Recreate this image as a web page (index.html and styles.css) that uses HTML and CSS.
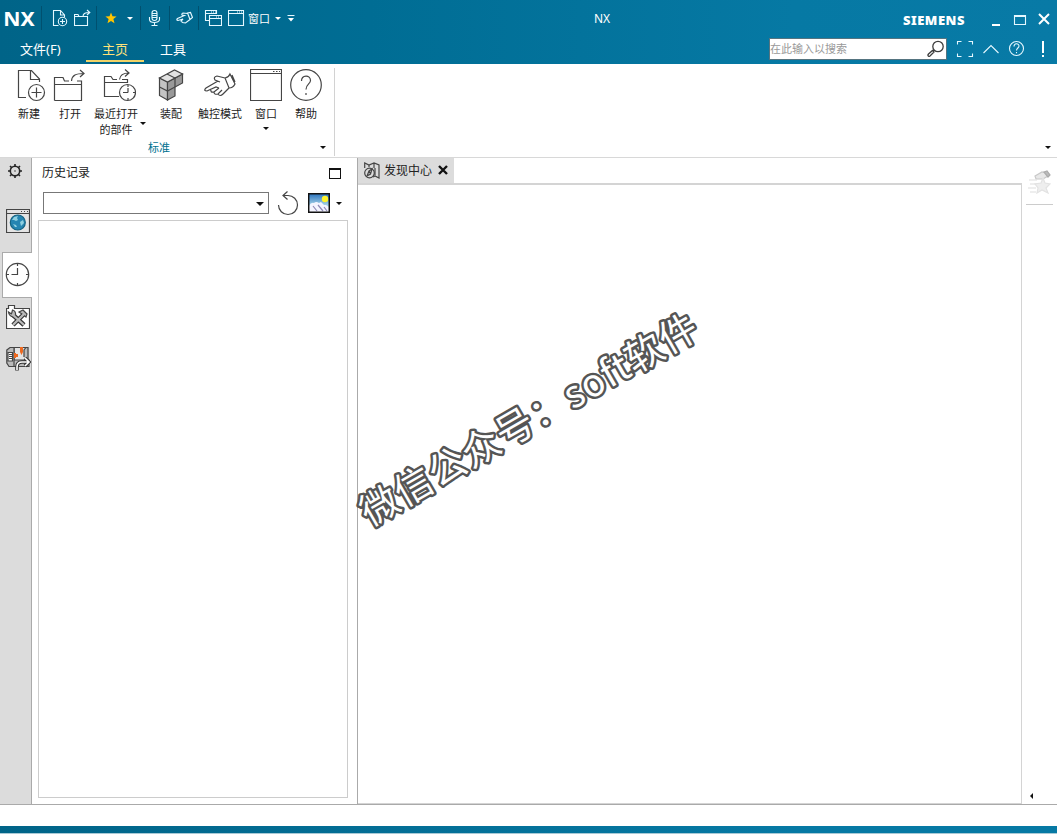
FILE: index.html
```html
<!DOCTYPE html>
<html lang="zh-CN">
<head>
<meta charset="utf-8">
<title>NX</title>
<link rel="stylesheet" href="styles.css">
</head>
<body>
<div class="app">
  <header class="header">
    <div class="titlebar">
      <div class="quick">
        <span class="logo">NX</span>
        <i class="sep sep-logo"></i>
        <svg class="q-new" width="16" height="18" viewBox="0 0 16 18"><path d="M6.5 16.5H1.5V1.5H8.5L12.5 6V8M8.5 1.5V6H12.5"/><circle cx="10.5" cy="12.5" r="4.2"/><path d="M8 12.5h5M10.500 10v5"/></svg>
        <svg class="q-open" width="17" height="18" viewBox="0 0 17 18"><path d="M.5 7.500V16.500H13.500V7.500ZM.5 7.500V5.500H4L5 7.500M9 7.500C9 5 10.500 3.500 15.500 3.500M13 1L15.800 3.500L13 6"/></svg>
        <i class="sep sep-a"></i>
        <svg class="q-star" width="12" height="12" viewBox="0 0 12 12"><path d="M6 .5L7.500 4.300L11.600 4.500L8.400 7.100L9.500 11.200L6 8.900L2.500 11.200L3.600 7.100L.4 4.500L4.500 4.300Z"/></svg>
        <i class="tri light star-tri"></i>
        <i class="sep sep-b"></i>
        <svg class="q-mic" width="13" height="18" viewBox="0 0 13 18"><rect x="4" y="1.500" width="5" height="10" rx="2.500"/><path d="M4 4.500h5M4 6.500h5M4 8.500h5M1.500 8v2.500c0 4 10 4 10 0V8M6.500 13.500v3M3.500 16.500h6"/></svg>
        <i class="sep sep-c"></i>
        <svg class="q-touch" width="17" height="14" viewBox="0 0 34 28"><path d="M23 4L29 3L33 13L28 17Z M23 5L14 4Q11 5 12 8L17 9L3 15Q0 18 4 19L14 16L10 20L13 23L19 24L28 17"/></svg>
        <i class="sep sep-d"></i>
        <svg class="q-cascade" width="18" height="18" viewBox="0 0 18 18"><path d="M5 11.500H1.500V1.500H12.500V5M1.500 4.500H12M5.500 7v9.500H17.500V6.500H5.500ZM5.500 9.500H17.500M7 3h1M9 3h1M11 3h1M12 8h1M14 8h1"/></svg>
        <svg class="q-window" width="17" height="18" viewBox="0 0 17 18"><path d="M.5 1.500h15v15H.5ZM.5 4.500h15M9 3h1M11 3h1M13 3h1"/></svg>
        <span class="q-label">窗口</span>
        <i class="tri light win-tri"></i>
        <svg class="q-more" width="8" height="7" viewBox="0 0 8 7"><path d="M.5 .5h7"/><path class="solid" d="M1 3h6L4 6.500Z"/></svg>
      </div>
      <div class="title">NX</div>
      <div class="brand">
        <span class="siemens">SIEMENS</span>
        <svg class="winctl" width="64" height="18" viewBox="0 0 64 18"><path class="thick" d="M1 15h8"/><path d="M23.500 5.500h11v9h-11ZM23.500 6.500h11"/><path class="thick" d="M48 4L58 14M58 4L48 14"/></svg>
      </div>
    </div>
    <nav class="menubar">
      <span class="menu file">文件(F)</span>
      <span class="menu home">主页</span>
      <span class="menu tools">工具</span>
      <div class="menu-right">
        <div class="search"><span>在此输入以搜索</span>
          <svg width="18" height="18" viewBox="0 0 18 18"><circle cx="11" cy="6.500" r="5.200"/><path d="M7.200 10L6 11.200M5.500 10.500L7 12L3 16Q1.500 17 1 15.500Q.7 15 1.500 14Z"/></svg>
        </div>
        <svg class="tools-icons" width="92" height="20" viewBox="0 0 92 20"><path d="M1.500 5.500V2.500H5.500M12.500 2.500H16.500V5.500M16.500 14.500V17.500H12.500M5.500 17.500H1.500V14.500M27.500 14L35 6.500L42.500 14"/><circle cx="60.500" cy="9.500" r="7"/><path d="M58 7.500C58 4 63 4 63 7C63 9 60.500 9 60.500 11.500M60.500 13v1.200"/><path class="thick" d="M87 2v12M87 16v2"/></svg>
      </div>
    </nav>
  </header>

  <section class="ribbon">
    <div class="group">
      <div class="commands">
        <div class="cmd new"><svg width="32" height="34" viewBox="0 0 32 34"><path d="M10 29.500H2.500V2.500H15.500L23.500 11V14M14.500 2.500V11.500H23.500"/><circle cx="20.500" cy="24.500" r="8"/><path d="M15.500 24.500h10M20.500 19.500v10"/></svg><span>新建</span></div>
        <div class="cmd open"><svg width="34" height="34" viewBox="0 0 34 34"><path d="M2.500 32.500V9.500H11L12.500 13H17M25 13h4.500V32.500H2.500M2.500 16.500h27M19.500 13C20 7 24 5.500 32 5.500M28 2L32 5.500L28 9"/></svg><span>打开</span></div>
        <div class="cmd recent"><svg width="34" height="34" viewBox="0 0 34 34"><path d="M17 28.500H2.500V8.500H9L11 11.500H15M20 11.500H25.500V15M2.500 14.500H25.500M17.500 11.500C18 7 21 5 27 5M23 1.500L27 5L23 8.500"/><circle cx="25.500" cy="24.500" r="8"/><path d="M26 17v2M26 24.500V20M26 24.500h-5M26 30v2M31 24.500h2"/></svg><span>最近打开<br>的部件</span><i class="tri recent-tri"></i></div>
        <div class="cmd assembly"><svg width="26" height="34" viewBox="0 0 26 34">
          <path class="face-l" d="M1.500 10L9.500 14V32L1.500 27.500Z"/><path class="face-r" d="M9.500 14L24.500 6V15L17 19V28L9.500 32Z"/><path class="face-t" d="M1.500 10L16.500 2L24.500 6L9.500 14Z"/><path d="M1.500 19L9.500 23L17 19V10L9 6"/></svg><span>装配</span></div>
        <div class="cmd touch"><svg width="34" height="34" viewBox="0 0 34 34"><path d="M22 10Q26 9 27 6L32 16Q30 20 26 20ZM29 7L32 14M22 10L14 8Q10 9 12 12L17 14M15 13L3 20Q0 23 4 23L13 19L16 20M8 21Q7 25 11 24L16 20M11 24Q11 27 15 26L19 22M15 26Q17 29 20 26L26 20"/></svg><span>触控模式</span></div>
        <div class="cmd window"><svg width="32" height="34" viewBox="0 0 32 34"><path d="M.5 1.500h31v31H.5ZM.5 5.500h31M23 3.500h1.500M26 3.500h1.500M29 3.500h1"/></svg><span>窗口</span><i class="tri"></i></div>
        <div class="cmd help"><svg width="32" height="34" viewBox="0 0 32 34"><circle cx="16" cy="17" r="15.300"/><path d="M11.500 13C11.500 6.500 20.500 6.500 20.500 12.500C20.500 16 16 16 16 21.500M16 25v2"/></svg><span>帮助</span></div>
      </div>
      <div class="group-name"><span>标准</span><i class="tri"></i></div>
    </div>
    <i class="tri ribbon-tri"></i>
  </section>

  <main class="workspace">
    <aside class="rail">
      <svg class="gear" width="16" height="16" viewBox="0 0 16 16"><circle cx="8" cy="8" r="4.700"/><path d="M8 1v3M8 12v3M1 8h3M12 8h3M3 3l2 2M11 11l2 2M13 3l-2 2M5 11l-2 2"/><circle class="dot" cx="8" cy="8" r=".7"/></svg>
      <div class="rail-item web"><svg width="24" height="24" viewBox="0 0 24 24"><path class="pale" d="M.5 .5h23v23H.5ZM.5 4.500h23M15 2.500h1M18 2.500h1M21 2.500h1"/><circle class="globe" cx="11.800" cy="13.500" r="7.500"/><path class="land" d="M6 11L8 8L12 7L11 9L12 11L10 12L8 11ZM14 13L17 11L18 14L15 17ZM7 15L10 16L11 18L9 18Z"/></svg></div>
      <div class="rail-item history"><svg width="25" height="25" viewBox="0 0 25 25"><circle cx="12.500" cy="12.500" r="11.200"/><path d="M12.500 1v3M12.500 6v6.500H6.500M1 12.500h3M21 12.500h3M12.500 21v3"/></svg></div>
      <div class="rail-item toolbox"><svg width="24" height="24" viewBox="0 0 24 24"><path class="paper" d="M.5 23.500V3.500H2.500V.5H8.500V3.500H23.500V23.500Z"/><path class="wrench-back" d="M6 9L18 20M18 9L7 20"/><path class="metal" d="M2.500 7L5.500 9L6.500 5Q10 6 9.500 10L7 12Q3 11 2.500 7ZM13 7L17 5L21 9L20 12L16 9Z"/><path class="wrench" d="M6 9L18 20M18 9L7 20"/></svg></div>
      <div class="rail-item machine"><svg width="25" height="25" viewBox="0 0 25 25"><path class="pale" d="M8 1.500H21.500V15H8Z"/><path class="metal" d="M.8 4L4 1.500H8V20.500H3L.8 17ZM8 14H23V20.500H8ZM18 11V4L20 1.500H22V14"/><path class="paper" d="M2 6.500h4.500v8.500H2Z"/><path d="M3 8.500h3M3 10.500h3M3 12.500h3"/><path class="orange" d="M8 7h2v1h2v3h-2v1H8ZM14 1h3v5l-1.500 3L14 6Z"/><path class="hose-back" d="M11 24.500V21Q11 16 16 16H22M19 12L23 16L19 20"/><path class="hose" d="M11 24V21Q11 16 16 16H22M19 12L23 16L19 20"/></svg></div>
    </aside>

    <section class="panel">
      <div class="panel-title"><span>历史记录</span><i class="maximize"></i></div>
      <div class="panel-tools">
        <div class="combo"><i class="tri big"></i></div>
        <svg class="refresh" width="22" height="25" viewBox="0 0 22 25"><path d="M1.500 14A9.500 9.500 0 1 0 11 4.500H6M10.500 .5L6 4.500L10.500 8.500"/></svg>
        <svg class="picture" width="22" height="20" viewBox="0 0 22 20"><defs><linearGradient id="sky" x2="0" y2="1"><stop stop-color="#226cba"/><stop offset=".7" stop-color="#b9e1ef"/></linearGradient></defs><path fill="url(#sky)" d="M0 0h22v20H0Z"/><circle class="sun" cx="17" cy="6" r="3.200"/><path class="mountain" d="M1 13Q3 9 6 10Q8 8 11 10L13 9L16 12L18 12L21 14V19H1Z"/><path class="shade" d="M5 13L9 18M10 12L15 18M16 14L19 18"/><path class="frame" d="M.7 .7h20.600v18.600H.7Z"/></svg>
        <i class="tri"></i>
      </div>
      <div class="history-list"></div>
    </section>

    <section class="content">
      <div class="doc-tab">
        <svg width="16" height="17" viewBox="0 0 16 17"><path d="M.7 6V1L5 3L10 1L15 3V16L11 14L9 15M5 3V5M10 1V6M11 6V14"/><circle cx="5.500" cy="11" r="4.800"/><path d="M3 14L5 9L8 7L6.500 12ZM5 9L6.500 12"/></svg>
        <span>发现中心</span>
        <svg class="close" width="10" height="10" viewBox="0 0 10 10"><path d="M1 1L9 9M9 1L1 9"/></svg>
      </div>
      <div class="canvas-row">
        <div class="canvas"></div>
        <div class="right-rail">
          <i class="collapse"></i>
        </div>
      </div>
      <div class="favorite"><svg width="23" height="24" viewBox="0 0 23 24"><path class="cup" d="M7 6L14 2L18 3L20 6L15 9L8 9Z"/><path class="cuff" d="M16 2L19 1L22 5L20 7Z"/><path class="lines" d="M1 10h8M2 14h8M0 18h8M2 22h6"/><path class="faint-star" d="M15 8L17 13L22 14L18 18L20 23L14 20L9 23L10 18L7 14L13 13Z"/></svg></div>
      <svg class="watermark" width="390" height="260" viewBox="0 0 390 260"><text x="0" y="0" transform="translate(32 238) rotate(-30)" textLength="382.500">微信公众号：soft软件</text></svg>
    </section>
  </main>
  <footer class="status"></footer>
  <div class="bottom-edge"></div>
</div>
</body>
</html>
```
FILE: styles.css
```css
* { box-sizing: border-box; }
body { margin: 0; overflow: hidden; background: #fff; color: #222; font-family: "Noto Sans", "Noto Sans CJK SC", sans-serif; }
svg { display: block; flex: none; fill: none; stroke: #454545; stroke-width: 1.2; }
.app { display: flex; flex-direction: column; width: 1057px; height: 834px; }

.header { height: 64px; flex: none; color: #fff; background: linear-gradient(90deg, #006488, #006d94 35%, #0679a4 75%, #087aa6); }
.header svg { stroke: #e5f8ff; stroke-width: 1.1; }
.titlebar { height: 36px; display: grid; grid-template-columns: 500px 204px 1fr; }
.quick { display: flex; align-items: center; height: 36px; }
.logo { width: 40px; padding-left: 3px; font: bold 20px/36px "Noto Sans", sans-serif; transform: translateY(1px) scaleX(1.06); transform-origin: left; }
.sep { width: 1px; height: 24px; background: #00506f; }
.sep-logo { margin-left: 1px; }
.q-new { margin-left: 10px; }
.q-open { margin-left: 6px; }
.sep-a { margin-left: 5px; }
.header .q-star { margin-left: 8px; fill: #ffc400; stroke: none; }
.tri { display: block; flex: none; width: 0; height: 0; border: solid transparent; border-width: 3px 3px 0; border-top-color: #111; }
.tri.light { border-top-color: #fff; }
.tri.big { border-width: 4px 4px 0; }
.star-tri { margin-left: 10px; }
.sep-b { margin-left: 7px; }
.q-mic { margin-left: 7px; }
.sep-c { margin-left: 8px; }
.header .q-touch { margin-left: 6px; stroke-width: 2.300; }
.sep-d { margin-left: 5px; }
.q-cascade { margin-left: 5px; }
.q-window { margin-left: 6px; }
.q-label { margin-left: 3px; font-size: 11px; margin-top: -1px; }
.win-tri { margin-left: 5px; }
.q-more { margin-left: 6px; }
.header .solid { fill: #fff; stroke: none; }
.title { font-size: 12px; line-height: 37px; text-align: center; }
.brand { display: flex; justify-content: flex-end; align-items: center; }
.siemens { width: 64px; font: 900 13px/16px "Noto Sans", sans-serif; letter-spacing: .5px; margin-right: 24px; padding-top: 2px; }
.winctl { margin-right: 2px; }
.header .thick { stroke: #fff; stroke-width: 2; }
.menubar { display: flex; height: 28px; align-items: flex-start; font-size: 13px; line-height: 26px; }
.menu { height: 26px; }
.file { width: 66px; margin-left: 20px; }
.home { width: 58px; text-align: center; color: #ffe27a; border-bottom: 2px solid #f0d267; }
.tools { margin-left: 16px; }
.menu-right { margin-left: auto; display: flex; padding: 2px 9px 0 0; }
.search { display: flex; justify-content: space-between; align-items: center; width: 178px; height: 22px; padding: 0 1px 0 0; color: #999; background: #fff; border: 1px solid #557480; font-size: 11px; }
.header .search svg { stroke: #3d3d3d; stroke-width: 1.300; }
.tools-icons { margin: 1px 0 0 9px; }

.ribbon { position: relative; height: 94px; flex: none; border-bottom: 1px solid #d8d8d8; }
.group { width: 335px; height: 88px; margin-top: 4px; border-right: 1px solid #d2d2d2; }
.commands { display: flex; height: 71px; font-size: 11px; line-height: 16px; text-align: center; }
.cmd { display: flex; flex-direction: column; align-items: center; flex: none; }
.cmd svg { margin-top: -.5px; }
.cmd span { margin-top: 4px; white-space: nowrap; }
.new { width: 34px; margin-left: 12px; }
.new svg { margin-left: 5px; }
.open { width: 36px; margin-left: 6px; }
.open svg { margin-left: -2px; }
.recent { position: relative; width: 50px; margin-left: 3px; }
.recent svg { margin-left: 5px; }
.recent-tri { position: absolute; right: -5px; top: 54px; }
.assembly { width: 30px; margin-left: 15px; }
.assembly svg { margin-left: -1px; }
.touch { width: 46px; margin-left: 11px; }
.window { width: 32px; margin-left: 7px; }
.window .tri { margin-top: 5px; }
.help { width: 32px; margin-left: 8px; }
.face-l { fill: #c4c4c4; }
.face-r { fill: #999; }
.face-t { fill: #e2e2e2; }
.group-name { display: flex; height: 16px; align-items: center; padding-left: 148px; color: #00708f; font-size: 11px; }
.group-name .tri { margin-left: auto; margin-right: 8px; }
.ribbon-tri { position: absolute; right: 6px; bottom: 8px; }

.workspace { display: flex; height: 647px; flex: none; border-bottom: 1px solid #aaa; }
.rail { width: 32px; flex: none; background: #dcdcdc; border-right: 1px solid #aaa; padding-top: 5px; }
.gear { margin-left: 7px; stroke: #252525; stroke-width: 1.600; }
.dot { fill: #222; stroke: none; }
.rail-item { padding-left: 6px; }
.web { margin-top: 30px; }
.paper { fill: #fff; }
.pale { fill: #e4e4e4; }
.globe { fill: #2585b2; stroke: #146382; }
.land { fill: #8fd0e0; stroke: none; }
.history { width: 30px; height: 46px; margin: 19px 0 0 2px; padding: 9px 0 0 2px; background: #fff; border: 1px solid #aaa; border-right: 0; }
.toolbox { margin-top: 7px; }
.wrench-back { stroke: #333; stroke-width: 4.500; }
.wrench { stroke: #bbb; stroke-width: 2.300; }
.metal { fill: #bababa; }
.machine { margin-top: 17px; }
.orange { fill: #ed6920; stroke: none; }
.hose-back { stroke: #333; stroke-width: 3.600; }
.hose { stroke: #fff; stroke-width: 1.600; }

.panel { display: flex; flex-direction: column; width: 326px; flex: none; border-right: 1px solid #aaa; }
.panel-title { display: flex; height: 29px; padding: 0 16px 1px 10px; align-items: center; justify-content: space-between; font-size: 12px; }
.maximize { width: 12px; height: 11px; border: 1px solid #111; border-top-width: 2px; margin-top: 3px; }
.panel-tools { display: flex; height: 33px; align-items: center; padding: 0 0 1px 11px; }
.combo { display: flex; width: 226px; height: 22px; padding-right: 4px; justify-content: flex-end; align-items: center; border: 1px solid #777; }
.combo .tri { margin-top: 2px; }
.refresh { margin-left: 8px; }
.picture { margin-left: 9px; }
.panel-tools > .tri { margin-left: 6px; }
.sun { fill: #fff32c; stroke: none; }
.mountain { fill: #f4f4ff; stroke: none; }
.shade { stroke: #8e88b5; }
.frame { stroke: #111; stroke-width: 1.500; }
.history-list { flex: 1; margin: 0 9px 6px 6px; border: 1px solid #ccc; }

.content { position: relative; display: flex; flex-direction: column; flex: 1; }
.doc-tab { display: flex; width: 96px; height: 25px; padding: 0 0 1px 6px; align-items: center; background: #dcdcdc; font-size: 12px; }
.doc-tab span { margin-left: 4px; }
.doc-tab .close { margin-left: 6px; stroke: #111; stroke-width: 2.400; }
.canvas-row { display: flex; flex: 1; }
.canvas { width: 664px; border: solid #d4d4d4; border-width: 2px 1px 1px 0; }
.right-rail { display: flex; flex: 1; align-items: flex-end; padding: 0 0 5px 8px; }
.collapse { border: solid transparent; border-width: 3px 3px 3px 0; border-right-color: #111; }
.favorite { position: absolute; right: 4px; top: 11px; width: 27px; height: 36px; padding-top: 1px; border-bottom: 1px solid #ccc; }
.favorite svg { margin-left: 2px; }
.cup { fill: #e8e8e8; stroke: #c8c8c8; }
.cuff { fill: #bbb; stroke: #aaa; }
.lines { stroke: #ddd; }
.faint-star { fill: #eee; stroke: #e2e2e2; }
.watermark { position: absolute; left: -20px; top: 131px; overflow: visible; }
.watermark text { font: 400 38px "Noto Sans CJK SC", sans-serif; fill: #fff; stroke: #555; stroke-width: 5px; stroke-linejoin: round; paint-order: stroke; }

.status { height: 21px; flex: none; }
.bottom-edge { height: 8px; flex: none; background: linear-gradient(90deg, #006488, #0679a4 75%); border-bottom: 1px solid #a9cad6; }
```
